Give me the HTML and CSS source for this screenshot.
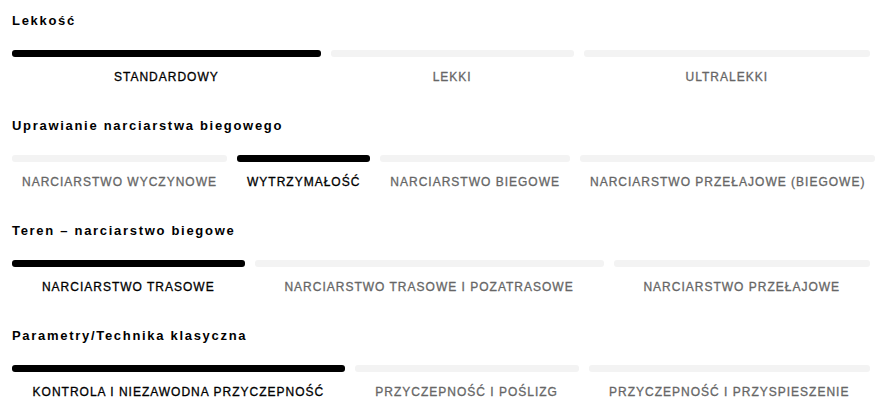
FILE: index.html
```html
<!DOCTYPE html>
<html lang="pl">
<head>
    <meta charset="UTF-8">
    <meta name="viewport" content="width=device-width, initial-scale=1.0">
    <title>Parametry nart biegowych</title>
    <link rel="stylesheet" href="styles.css">
</head>
<body>
    <div class="specs">
        <section class="spec">
            <h2 class="spec-title">Lekkość</h2>
            <div class="scale">
                <div class="scale-item active"><span class="bar"></span><span class="label">Standardowy</span></div>
                <div class="scale-item"><span class="bar"></span><span class="label">Lekki</span></div>
                <div class="scale-item"><span class="bar"></span><span class="label">Ultralekki</span></div>
            </div>
        </section>

        <section class="spec">
            <h2 class="spec-title">Uprawianie narciarstwa biegowego</h2>
            <div class="scale">
                <div class="scale-item"><span class="bar"></span><span class="label">Narciarstwo wyczynowe</span></div>
                <div class="scale-item active"><span class="bar"></span><span class="label">Wytrzymałość</span></div>
                <div class="scale-item"><span class="bar"></span><span class="label">Narciarstwo biegowe</span></div>
                <div class="scale-item"><span class="bar"></span><span class="label">Narciarstwo przełajowe (biegowe)</span></div>
            </div>
        </section>

        <section class="spec">
            <h2 class="spec-title">Teren – narciarstwo biegowe</h2>
            <div class="scale">
                <div class="scale-item active"><span class="bar"></span><span class="label">Narciarstwo trasowe</span></div>
                <div class="scale-item"><span class="bar"></span><span class="label">Narciarstwo trasowe i pozatrasowe</span></div>
                <div class="scale-item"><span class="bar"></span><span class="label">Narciarstwo przełajowe</span></div>
            </div>
        </section>

        <section class="spec">
            <h2 class="spec-title">Parametry/Technika klasyczna</h2>
            <div class="scale">
                <div class="scale-item active"><span class="bar"></span><span class="label">Kontrola i niezawodna przyczepność</span></div>
                <div class="scale-item"><span class="bar"></span><span class="label">Przyczepność i poślizg</span></div>
                <div class="scale-item"><span class="bar"></span><span class="label">Przyczepność i przyspieszenie</span></div>
            </div>
        </section>
    </div>
</body>
</html>
```

FILE: styles.css
```css
* {
    margin: 0;
    padding: 0;
    box-sizing: border-box;
}

body {
    font-family: "Liberation Sans", Arial, sans-serif;
    background: #fff;
    color: #000;
}

.specs {
    padding: 13px 15px 0 12px;
}

.spec {
    margin-bottom: 33px;
}

.spec-title {
    font-size: 13px;
    line-height: 16px;
    font-weight: 700;
    letter-spacing: 1.7px;
    margin-bottom: 21px;
}

.scale {
    display: flex;
    gap: 10px;
}

.scale-item {
    flex: 1 1 auto;
    display: flex;
    flex-direction: column;
    align-items: center;
}

.bar {
    display: block;
    width: 100%;
    height: 7px;
    border-radius: 3px;
    background: #f3f3f3;
    margin-bottom: 12px;
}

.label {
    font-size: 12px;
    line-height: 16px;
    text-transform: uppercase;
    letter-spacing: 1px;
    color: #666;
    -webkit-text-stroke: 0.3px currentColor;
    white-space: nowrap;
    padding: 0 10px;
}

.scale-item.active .bar {
    background: #000;
}

.scale-item.active .label {
    color: #000;
}
```
